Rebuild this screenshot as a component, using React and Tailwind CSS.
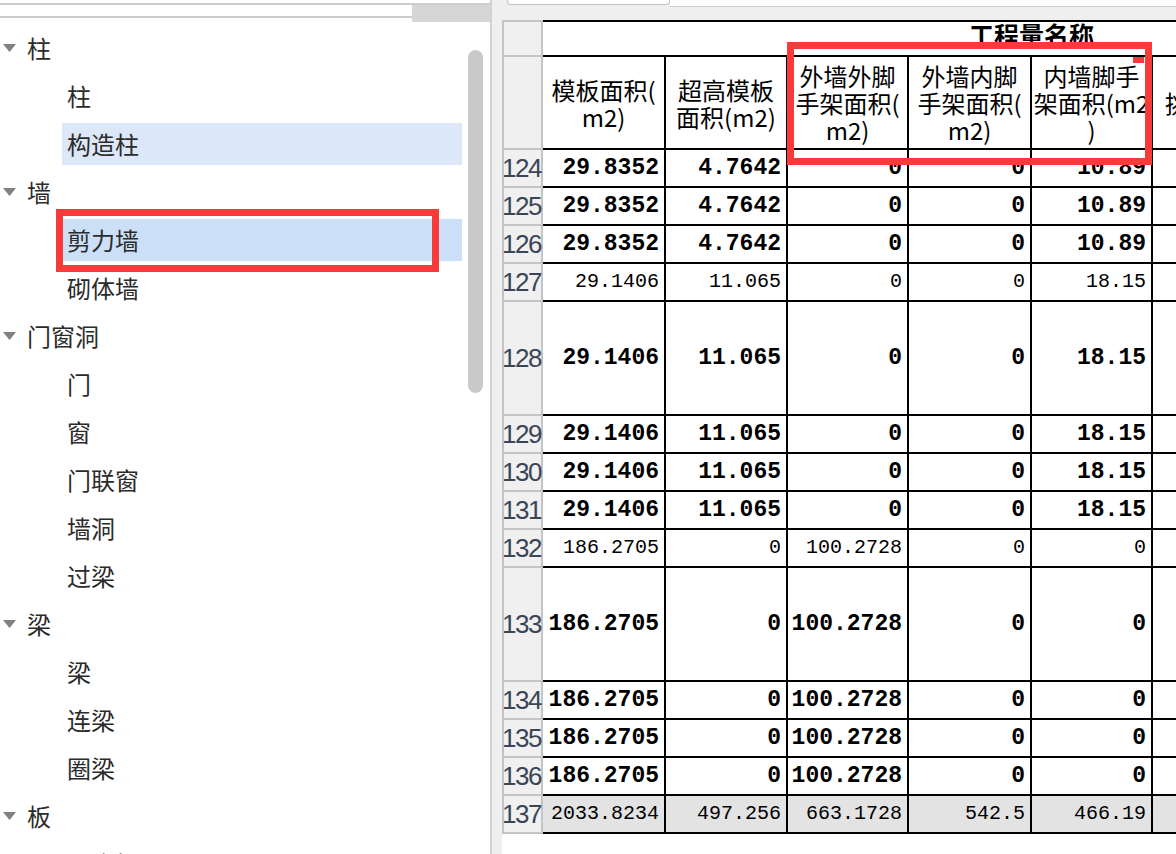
import React from 'react';

const tree = [
  { label: '柱', top: true },
  { label: '柱' },
  { label: '构造柱', hl: 'soft' },
  { label: '墙', top: true },
  { label: '剪力墙', hl: 'sel', mark: true },
  { label: '砌体墙' },
  { label: '门窗洞', top: true },
  { label: '门' },
  { label: '窗' },
  { label: '门联窗' },
  { label: '墙洞' },
  { label: '过梁' },
  { label: '梁', top: true },
  { label: '梁' },
  { label: '连梁' },
  { label: '圈梁' },
  { label: '板', top: true },
  { label: '现浇板' },
];

const cols = ['w-[123px]', 'w-[122px]', 'w-[121px]', 'w-[123px]', 'w-[121px]', 'w-[122px]'];

const headers = [
  ['模板面积(', 'm2)'],
  ['超高模板', '面积(m2)'],
  ['外墙外脚', '手架面积(', 'm2)'],
  ['外墙内脚', '手架面积(', 'm2)'],
  ['内墙脚手', '架面积(m2', ')'],
  ['挑檐面积'],
];

const A = ['29.8352', '4.7642', '0', '0', '10.89', ''];
const B = ['29.1406', '11.065', '0', '0', '18.15', ''];
const C = ['186.2705', '0', '100.2728', '0', '0', ''];

const rows = [
  { n: 124, v: A, bold: true },
  { n: 125, v: A, bold: true },
  { n: 126, v: A, bold: true },
  { n: 127, v: B },
  { n: 128, v: B, bold: true, tall: true },
  { n: 129, v: B, bold: true },
  { n: 130, v: B, bold: true },
  { n: 131, v: B, bold: true },
  { n: 132, v: C },
  { n: 133, v: C, bold: true, tall: true },
  { n: 134, v: C, bold: true },
  { n: 135, v: C, bold: true },
  { n: 136, v: C, bold: true },
  { n: 137, v: ['2033.8234', '497.256', '663.1728', '542.5', '466.19', ''], total: true },
];

const TreeRow = ({ item }) => {
  if (item.top) {
    return (
      <div className="flex h-[48px] items-center">
        <svg className="ml-[3px] h-[8px] w-[13px]" viewBox="0 0 13 8">
          <path d="M0 0H13L6.5 8Z" fill="#808080" />
        </svg>
        <span className="ml-[11px] text-[24px] leading-none text-[#2b2b2b]">{item.label}</span>
      </div>
    );
  }

  const bg = item.hl === 'sel' ? 'bg-[#cbdff6]' : item.hl === 'soft' ? 'bg-[#dce8f8]' : '';

  return (
    <div className="relative flex h-[48px] items-center pl-[62px]">
      <div className={`flex h-[42px] w-[400px] items-center pl-[5px] ${bg}`}>
        <span className="text-[24px] leading-none text-[#2b2b2b]">{item.label}</span>
      </div>
      {item.mark && (
        <div className="absolute left-[56px] top-[-7px] z-10 h-[63px] w-[383px] border-[7px] border-[#f73b3b]" />
      )}
    </div>
  );
};

const RowHead = ({ children, className = '' }) => (
  <div
    className={`flex w-[41px] shrink-0 items-center overflow-visible border-x-2 border-b-2 border-[#c4c4c4] bg-[#f0f0f0] ${className}`}
  >
    {children}
  </div>
);

export default function App() {
  return (
    <div className="flex h-[854px] w-[1176px] overflow-hidden bg-white font-['Noto_Sans_CJK_SC',sans-serif]">
      {/* tree panel */}
      <div className="relative w-[490px] shrink-0 overflow-hidden">
        <div className="h-[24px] pt-[3px]">
          <div className="border-t-2 border-[#cdcdcd]" />
          <div className="flex">
            <div className="h-[13px] flex-1 border-b-2 border-[#cdcdcd]" />
            <div className="h-[17px] w-[78px] bg-[#d6d6d6]" />
          </div>
        </div>
        {tree.map((item, i) => (
          <TreeRow key={i} item={item} />
        ))}
        <div className="absolute left-[468px] top-[50px] h-[343px] w-[15px] rounded-full bg-[#c9c9c9]" />
      </div>

      <div className="w-[2px] shrink-0 bg-[#d2d2d2]" />

      {/* grid panel */}
      <div className="relative flex min-w-0 flex-1 flex-col bg-[#efefef]">
        <div className="h-[20px] shrink-0">
          <div className="flex h-[7px]">
            <div className="w-[15px] shrink-0" />
            <div className="h-[5px] w-[163px] shrink-0 rounded-b-[4px] border-x border-b border-[#c4c4c4] bg-white" />
            <div className="flex-1 border-b border-[#d0d0d0] bg-white" />
          </div>
        </div>

        <div className="flex flex-1">
          <div className="w-[10px] shrink-0" />
          <div className="flex-1 overflow-hidden bg-white">
            {/* header row 1 */}
            <div className="flex h-[37px]">
              <RowHead className="border-t-2 bg-[#efefef]" />
              <div className="flex shrink-0 border-y-2 border-black">
                <div className="w-[245px] shrink-0" />
                <div className="flex w-[487px] shrink-0 items-center justify-center pb-[8px] text-[25px] font-bold leading-none text-black">
                  工程量名称
                </div>
              </div>
            </div>

            {/* header row 2 */}
            <div className="flex h-[93px]">
              <RowHead className="bg-[#efefef]" />
              {headers.map((lines, i) => (
                <div
                  key={i}
                  className={`flex shrink-0 flex-col items-center justify-center border-r-2 border-b-2 border-black text-[24px] leading-[27px] text-black ${cols[i]}`}
                >
                  {lines.map((l, j) => (
                    <div key={j} className="whitespace-nowrap">
                      {l}
                    </div>
                  ))}
                </div>
              ))}
            </div>

            {/* data rows */}
            {rows.map((r) => (
              <div key={r.n} className={`flex ${r.tall ? 'h-[114px]' : 'h-[38px]'}`}>
                <RowHead>
                  <span className="-ml-[2px] whitespace-nowrap font-['Liberation_Sans',sans-serif] text-[26px] leading-none tracking-[-1.5px] text-[#3a4556]">
                    {r.n}
                  </span>
                </RowHead>
                {r.v.map((val, i) => (
                  <div
                    key={i}
                    className={`flex shrink-0 items-center justify-end border-r-2 border-b-2 border-black pr-[5px] font-['Liberation_Mono',monospace] leading-none text-black ${cols[i]} ${
                      r.bold ? 'text-[23px] font-bold' : 'text-[20px]'
                    } ${r.total ? 'bg-[#e3e3e3]' : ''}`}
                  >
                    {val}
                  </div>
                ))}
              </div>
            ))}
          </div>
        </div>

        {/* annotation */}
        <div className="absolute left-[295px] top-[42px] z-10 h-[123px] w-[365px] border-[7px] border-[#f73b3b]" />
        <div className="absolute left-[641px] top-[57px] z-10 h-[6px] w-[11px] bg-[#f73b3b]" />
      </div>
    </div>
  );
}
